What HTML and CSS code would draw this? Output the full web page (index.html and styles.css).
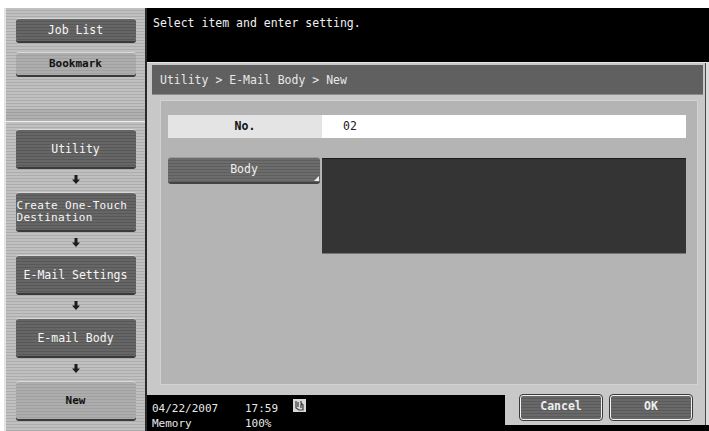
FILE: index.html
```html
<!DOCTYPE html>
<html lang="en">
	<head>
		<meta charset="utf-8" />
		<title>E-Mail Body - New</title>
		<link rel="stylesheet" href="styles.css">
	</head>
	<body>
		<div id="panel" class="device">
			<!-- left: shortcut keys and the menu trail -->
			<div id="sideBar" class="side">
				<div class="side top">
					<div class="key dark">Job List</div>
					<div class="key light">Bookmark</div>
				</div>
				<div class="side trail">
					<div class="key dark tall">Utility</div>
					<div class="step"><svg width="8" height="9" viewBox="0 0 8 9"><path d="M2.5 0h3v4.5h2.5l-4 4.5-4-4.5h2.5z" fill="#1c1c1c"/></svg></div>
					<div class="key dark tall two">Create One-Touch<br/>Destination</div>
					<div class="step"><svg width="8" height="9" viewBox="0 0 8 9"><path d="M2.5 0h3v4.5h2.5l-4 4.5-4-4.5h2.5z" fill="#1c1c1c"/></svg></div>
					<div class="key dark tall">E-Mail Settings</div>
					<div class="step"><svg width="8" height="9" viewBox="0 0 8 9"><path d="M2.5 0h3v4.5h2.5l-4 4.5-4-4.5h2.5z" fill="#1c1c1c"/></svg></div>
					<div class="key dark tall">E-mail Body</div>
					<div class="step"><svg width="8" height="9" viewBox="0 0 8 9"><path d="M2.5 0h3v4.5h2.5l-4 4.5-4-4.5h2.5z" fill="#1c1c1c"/></svg></div>
					<div class="key light tall">New</div>
				</div>
			</div>

			<!-- right: message line, setting window, status and keys -->
			<div id="mainArea" class="main">
				<div class="message">Select item and enter setting.</div>
				<div class="window">
					<div class="path">Utility &gt; E-Mail Body &gt; New</div>
					<div class="form">
						<div class="row">
							<div class="label">No.</div>
							<div class="value">02</div>
						</div>
						<div class="row">
							<div class="field">Body<span class="corner"></span></div>
							<div class="text"></div>
						</div>
					</div>
				</div>
				<div class="bottom">
					<div class="status">
						<div class="line"><span class="date">04/22/2007</span><span class="time">17:59</span>
							<svg class="toner" width="13" height="13" viewBox="0 0 13 13">
								<rect x="0" y="0" width="13" height="13" fill="#d8d8d8"/>
								<path d="M3 2v7l3 2h4V6L8 4V2M5 3v5M8 5v4" fill="none" stroke="#3a3a3a" stroke-width="1.2"/>
							</svg>
						</div>
						<div class="line"><span class="date">Memory</span><span class="time">100%</span></div>
					</div>
					<div class="actions">
						<div class="btn">Cancel</div>
						<div class="btn">OK</div>
					</div>
				</div>
			</div>
		</div>
	</body>
</html>
```

FILE: styles.css
```css
body {
	margin: 0;
	background-color: #fff;
	font-family: "DejaVu Sans Mono", "Liberation Mono", monospace;
	font-size: 11.5px;
}

.device {
	display: flex;
	margin: 8px 0 0 4px;
	height: 423px;
	overflow: hidden;
}

/* side bar */
#sideBar {
	display: flex;
	flex-direction: column;
	width: 141px;
	border-right: 2px solid #2a2a2a;
	background-color: #b8b8b8;
}
.side.top, .side.trail {
	display: flex;
	flex-direction: column;
	align-items: center;
	background-image: repeating-linear-gradient(180deg, #c0c0c0 0px, #c0c0c0 2px, #acacac 2px, #acacac 3px);
	border-left: 2px solid #e4e4e4;
}
.side.top {
	height: 114px;
	padding-top: 10px;
	box-sizing: border-box;
	gap: 11px;
	border-bottom: 1px solid #eeeeee;
	box-shadow: inset 0 -12px 0 rgba(0,0,0,0.08);
}
.side.trail {
	flex: 1;
	padding-top: 7px;
}
.key {
	width: 120px;
	height: 23px;
	box-sizing: border-box;
	display: flex;
	align-items: center;
	justify-content: center;
	text-align: center;
	border-radius: 3px;
	border-top: 1px solid #d8d8d8;
	box-shadow: 0 2px 0 #3a3a3a;
	line-height: 12px;
}
.key.dark {
	background-image: repeating-linear-gradient(180deg, #666 0px, #666 2px, #585858 2px, #585858 3px);
	color: #f6f6f6;
}
.key.light {
	background-image: repeating-linear-gradient(180deg, #adadad 0px, #adadad 2px, #a0a0a0 2px, #a0a0a0 3px);
	color: #111;
	font-weight: bold;
	font-size: 11px;
}
.key.tall {
	height: 38px;
}
.key.two {
	justify-content: flex-start;
	text-align: left;
	padding-left: 1px;
	font-size: 11px;
	letter-spacing: 0.3px;
}
.step {
	height: 25px;
	display: flex;
	align-items: center;
	justify-content: center;
}

/* main column */
#mainArea {
	display: flex;
	flex-direction: column;
	width: 562px;
	background-color: #000;
}
.message {
	height: 54px;
	box-sizing: border-box;
	padding: 8px 0 0 6px;
	color: #f0f0f0;
}
.window {
	height: 333px;
	box-sizing: border-box;
	background-color: #c8c8c8;
	border-top: 1px solid #e6e6e6;
	border-right: 3px solid #dcdcdc;
	box-shadow: inset -1px 0 0 #4a4a4a;
	padding: 2px 3px 0 5px;
	display: flex;
	flex-direction: column;
}
.path {
	height: 29px;
	box-sizing: border-box;
	padding: 8px 0 0 8px;
	background-color: #606060;
	color: #e8e8e8;
	box-shadow: 0 1px 0 #8c8c8c;
}
.form {
	flex: 1;
	margin: 6px 5px 10px 8px;
	background-color: #b4b4b4;
	border: 1px solid #d2d2d2;
	padding: 14px 7px 0 7px;
}
.row {
	display: flex;
}
.row + .row {
	margin-top: 19px;
}
.label {
	width: 154px;
	height: 23px;
	line-height: 23px;
	text-align: center;
	background-color: #e4e4e4;
	color: #111;
	font-weight: bold;
}
.value {
	width: 364px;
	height: 23px;
	line-height: 23px;
	padding-left: 21px;
	box-sizing: border-box;
	background-color: #fff;
	color: #222;
}
.field {
	position: relative;
	width: 152px;
	height: 25px;
	margin-right: 2px;
	box-sizing: border-box;
	padding-top: 4px;
	text-align: center;
	color: #f0f0f0;
	border-radius: 3px;
	border-top: 1px solid #9a9a9a;
	background-image: repeating-linear-gradient(180deg, #6c6c6c 0px, #6c6c6c 2px, #5e5e5e 2px, #5e5e5e 3px);
	box-shadow: 0 2px 0 #444;
}
.corner {
	position: absolute;
	right: 1px;
	bottom: 1px;
	border-left: 5px solid transparent;
	border-bottom: 5px solid #f0f0f0;
}
.text {
	width: 364px;
	height: 94px;
	margin-top: 1px;
	background-color: #343434;
	border-top: 1px solid #1a1a1a;
	box-shadow: 0 1px 0 #777;
}

/* status line and keys */
.bottom {
	display: flex;
	flex: 1;
}
.status {
	width: 358px;
	padding: 6px 0 0 5px;
	box-sizing: border-box;
	color: #e8e8e8;
	font-size: 11px;
	line-height: 15px;
}
.line {
	display: flex;
	align-items: center;
}
.date {
	width: 93px;
}
.time {
	width: 48px;
}
.toner {
	margin-top: -6px;
}
.actions {
	flex: 1;
	display: flex;
	gap: 8px;
	padding: 0 0 0 15px;
	height: 30px;
	background-color: #c8c8c8;
	border-right: 3px solid #dcdcdc;
	box-shadow: inset -1px 0 0 #4a4a4a;
}
.btn {
	width: 82px;
	height: 25px;
	box-sizing: border-box;
	line-height: 21px;
	text-align: center;
	color: #eeeeee;
	font-weight: bold;
	border: 1px solid #f2f2f2;
	border-radius: 3px;
	outline: 1px solid #3a3a3a;
	background-image: repeating-linear-gradient(180deg, #686868 0px, #686868 2px, #5a5a5a 2px, #5a5a5a 3px);
}
```
